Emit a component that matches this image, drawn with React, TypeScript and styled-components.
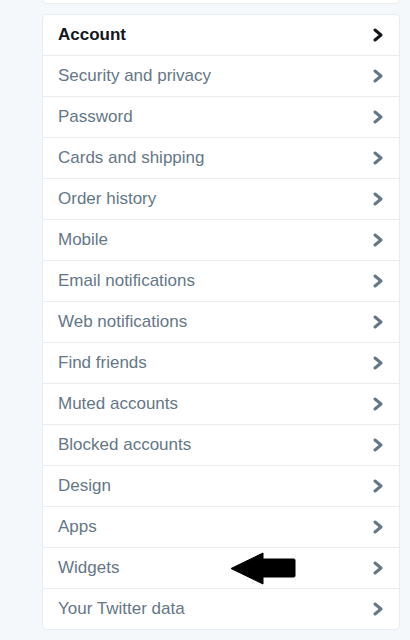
import React from "react";
import styled, { createGlobalStyle } from "styled-components";

const items = [
  "Account",
  "Security and privacy",
  "Password",
  "Cards and shipping",
  "Order history",
  "Mobile",
  "Email notifications",
  "Web notifications",
  "Find friends",
  "Muted accounts",
  "Blocked accounts",
  "Design",
  "Apps",
  "Widgets",
  "Your Twitter data",
];

const Global = createGlobalStyle`
  body {
    margin: 0;
    background: #f5f8fa;
    font-family: "Liberation Sans", Arial, sans-serif;
  }
`;

const Page = styled.div`
  width: 410px;
  height: 640px;
  overflow: hidden;
  display: flex;
  flex-direction: column;
  padding: 0 10px 0 42px;
  box-sizing: border-box;
`;

const TopCard = styled.div`
  margin-top: -4px;
  height: 6px;
  background: #fff;
  border: 1px solid #e6ecf0;
  border-radius: 0 0 5px 5px;
`;

const Card = styled.ul`
  list-style: none;
  margin: 10px 0 0;
  padding: 0;
  background: #fff;
  border: 1px solid #e6ecf0;
  border-radius: 5px;
`;

const Row = styled.li<{ $active?: boolean }>`
  position: relative;
  height: 40px;
  display: flex;
  align-items: center;
  justify-content: space-between;
  padding: 0 15px;
  font-size: 17px;
  color: ${(p) => (p.$active ? "#14171a" : "#657786")};
  font-weight: ${(p) => (p.$active ? 700 : 400)};
  border-bottom: 1px solid #e6ecf0;
  &:last-child {
    border-bottom: none;
  }
`;

const Chevron = styled.svg`
  width: 12px;
  height: 14px;
`;

const Pointer = styled.svg`
  position: absolute;
  left: 187px;
  top: 4px;
  width: 66px;
  height: 33px;
`;

function Arrow({ dark }: { dark?: boolean }) {
  return (
    <Chevron viewBox="0 0 12 14">
      <path
        d="M3 2 L9 7 L3 12"
        fill="none"
        stroke={dark ? "#14171a" : "#657786"}
        strokeWidth="3"
        strokeLinecap="round"
        strokeLinejoin="round"
      />
    </Chevron>
  );
}

export default function App() {
  return (
    <>
      <Global />
      <Page>
        <TopCard />
        <Card>
          {items.map((label, i) => (
            <Row key={label} $active={i === 0}>
              <span>{label}</span>
              {label === "Widgets" && (
                <Pointer viewBox="0 0 66 33">
                  <path
                    d="M1 16.5 L33 1 L33 7 L64 7 Q65 7 65 8 L65 24 Q65 25 64 25 L33 25 L33 32 Z"
                    fill="#000"
                    stroke="#000"
                    strokeWidth="1"
                    strokeLinejoin="round"
                  />
                </Pointer>
              )}
              <Arrow dark={i === 0} />
            </Row>
          ))}
        </Card>
      </Page>
    </>
  );
}
